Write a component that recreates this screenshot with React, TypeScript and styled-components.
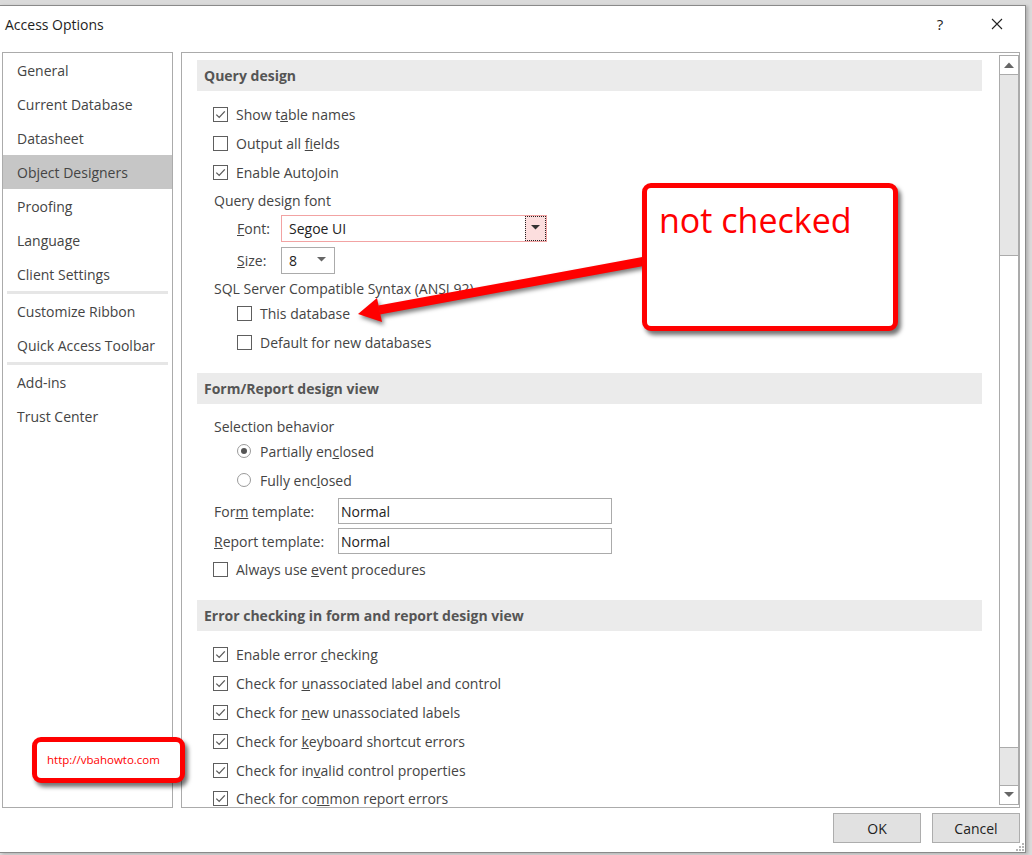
import React from "react";
import styled, { createGlobalStyle } from "styled-components";

// ---------- Global Styles ----------
const GlobalStyle = createGlobalStyle`
  * { box-sizing: border-box; }
  html, body { margin: 0; padding: 0; }
  body {
    background: #dadada;
    font-family: "Open Sans", "Segoe UI", "Liberation Sans", sans-serif;
    font-size: 14px;
    color: #444;
    overflow: hidden;
  }
`;

// ---------- styled-components ----------
const S = {
  Screen: styled.div`
    position: relative;
    width: 1032px;
    height: 855px;
    overflow: hidden;
  `,
  Dialog: styled.div`
    margin-top: 5px;
    width: 1026px;
    height: 848px;
    background: #fff;
    border-top: 1px solid #8a8a8a;
    border-right: 1px solid #8a8a8a;
    border-bottom: 1px solid #8a8a8a;
    box-shadow: 2px 1px 3px rgba(0, 0, 0, 0.2);
    display: flex;
    flex-direction: column;
  `,
  TitleBar: styled.div`
    height: 36px;
    display: flex;
    align-items: center;
    padding: 0 5px 0 5px;
  `,
  Title: styled.div`
    flex: 1;
    font-size: 14px;
    color: #1e1e1e;
  `,
  Help: styled.div`
    width: 30px;
    margin-right: 19px;
    text-align: center;
    font-size: 15px;
    color: #222;
  `,
  Close: styled.div`
    width: 46px;
    display: flex;
    justify-content: center;
    align-items: center;
  `,
  Body: styled.div`
    margin-top: 10px;
    height: 756px;
    display: flex;
    gap: 8px;
    padding-left: 2px;
  `,
  Nav: styled.nav`
    width: 171px;
    border: 1px solid #ababab;
    display: flex;
    flex-direction: column;
  `,
  NavItem: styled.div<{ $active?: boolean }>`
    height: 34px;
    flex: none;
    display: flex;
    align-items: center;
    padding-left: 14px;
    color: #444;
    background: ${(p) => (p.$active ? "#c6c6c6" : "transparent")};
  `,
  NavSep: styled.div`
    height: 3px;
    flex: none;
    margin: 0 4px;
    background: #e6e6e6;
  `,
  Panel: styled.div`
    width: 839px;
    border: 1px solid #ababab;
    display: flex;
    overflow: hidden;
  `,
  Scroll: styled.div`
    flex: 1;
    padding: 7px 17px 0 15px;
    overflow: hidden;
  `,
  SectionHead: styled.div<{ $mt?: number }>`
    height: 31px;
    margin-top: ${(p) => p.$mt ?? 0}px;
    background: #ebebeb;
    padding-left: 7px;
    display: flex;
    align-items: center;
    font-weight: 700;
    color: #555;
  `,
  Row: styled.div<{ $h: number; $indent: number; $mt?: number }>`
    height: ${(p) => p.$h}px;
    margin-top: ${(p) => p.$mt ?? 0}px;
    padding-left: ${(p) => p.$indent}px;
    display: flex;
    align-items: center;
    white-space: nowrap;
  `,
  Box: styled.span`
    width: 15px;
    height: 15px;
    flex: none;
    border: 1px solid #5e5e5e;
    background: #fff;
    margin-right: 8px;
    display: flex;
    align-items: center;
    justify-content: center;
  `,
  Radio: styled.span<{ $on?: boolean }>`
    width: 14px;
    height: 14px;
    flex: none;
    border-radius: 50%;
    border: 1px solid #9a9a9a;
    margin-right: 9px;
    display: flex;
    align-items: center;
    justify-content: center;
    &::after {
      content: "";
      width: 6px;
      height: 6px;
      border-radius: 50%;
      background: ${(p) => (p.$on ? "#555" : "transparent")};
    }
  `,
  Key: styled.u`
    text-decoration: underline;
    text-underline-offset: 1px;
  `,
  FieldLabel: styled.span<{ $w: number }>`
    width: ${(p) => p.$w}px;
    flex: none;
  `,
  Combo: styled.div<{ $w: number; $h: number; $focus?: boolean }>`
    width: ${(p) => p.$w}px;
    height: ${(p) => p.$h}px;
    border: 1px solid ${(p) => (p.$focus ? "#f2a3a3" : "#ababab")};
    background: #fff;
    display: flex;
    align-items: center;
    color: #222;
  `,
  ComboText: styled.span`
    flex: 1;
    padding-left: 7px;
  `,
  ComboBtn: styled.span<{ $focus?: boolean }>`
    width: ${(p) => (p.$focus ? 21 : 26)}px;
    align-self: stretch;
    display: flex;
    align-items: center;
    justify-content: center;
    background: ${(p) => (p.$focus ? "#fcdede" : "transparent")};
    border: ${(p) => (p.$focus ? "1px dotted #222" : "none")};
  `,
  TextInput: styled.div`
    width: 274px;
    height: 26px;
    border: 1px solid #ababab;
    padding-left: 2px;
    display: flex;
    align-items: center;
    color: #222;
  `,
  Scrollbar: styled.div`
    width: 20px;
    margin: 2px 0;
    border: 1px solid #ababab;
    background: #e6e6e6;
    display: flex;
    flex-direction: column;
  `,
  ScrollBtn: styled.div<{ $down?: boolean }>`
    height: 19px;
    flex: none;
    background: #fff;
    display: flex;
    align-items: center;
    justify-content: center;
    border-${(p) => (p.$down ? "top" : "bottom")}: 1px solid #ababab;
    margin-top: ${(p) => (p.$down ? "auto" : "0")};
  `,
  Thumb: styled.div`
    height: 493px;
    flex: none;
    margin-top: 180px;
    background: #fff;
    border-top: 1px solid #ababab;
    border-bottom: 1px solid #ababab;
  `,
  Footer: styled.div`
    position: relative;
    flex: 1;
    display: flex;
    justify-content: flex-end;
    align-items: flex-start;
    gap: 11px;
    padding: 5px 5px 0 0;
  `,
  Button: styled.button`
    width: 88px;
    height: 30px;
    border: 1px solid #adadad;
    background: #e1e1e1;
    font-family: inherit;
    font-size: 14px;
    color: #222;
    padding: 0;
  `,
  Grip: styled.svg`
    position: absolute;
    right: 0;
    bottom: 0;
  `,
  Callout: styled.div`
    position: absolute;
    left: 642px;
    top: 183px;
    width: 256px;
    height: 148px;
    border: 5px solid #ff0000;
    border-radius: 9px;
    background: #fff;
    box-shadow: 3px 4px 4px rgba(0, 0, 0, 0.55);
    padding: 12px 0 0 12px;
    color: #ff0000;
    font-size: 34px;
    line-height: 1.2;
  `,
  UrlTag: styled.div`
    position: absolute;
    left: 32px;
    top: 737px;
    width: 153px;
    height: 46px;
    border: 5px solid #ff0000;
    border-radius: 9px;
    background: #fff;
    box-shadow: 3px 4px 4px rgba(0, 0, 0, 0.55);
    padding: 0 0 2px 10px;
    display: flex;
    align-items: center;
    color: #ff0000;
    font-size: 11.5px;
  `,
  Arrow: styled.svg`
    position: absolute;
    left: 0;
    top: 0;
    pointer-events: none;
    filter: drop-shadow(2px 3px 2px rgba(0, 0, 0, 0.5));
  `,
};

// ---------- small drawings ----------
const Check = () => (
  <svg width="13" height="13" viewBox="0 0 13 13">
    <path d="M2.3 6.6 L5.2 9.4 L10.8 3.4" fill="none" stroke="#5a5a5a" strokeWidth="1.3" />
  </svg>
);

const Tri = ({ up, color = "#666", w = 9 }: { up?: boolean; color?: string; w?: number }) => (
  <svg width={w} height={w / 2 + 1} viewBox={`0 0 ${w} ${w / 2 + 1}`}>
    {up ? (
      <path d={`M0 ${w / 2 + 1} L${w / 2} 0.5 L${w} ${w / 2 + 1} Z`} fill={color} />
    ) : (
      <path d={`M0 0 L${w} 0 L${w / 2} ${w / 2} Z`} fill={color} />
    )}
  </svg>
);

function CheckRow({
  on,
  indent = 16,
  h = 29,
  mt,
  children,
}: {
  on?: boolean;
  indent?: number;
  h?: number;
  mt?: number;
  children: React.ReactNode;
}) {
  return (
    <S.Row $h={h} $indent={indent} $mt={mt}>
      <S.Box>{on && <Check />}</S.Box>
      <span>{children}</span>
    </S.Row>
  );
}

const navTop = ["General", "Current Database", "Datasheet", "Object Designers", "Proofing", "Language", "Client Settings"];

// ---------- component ----------
export default function App() {
  return (
    <>
      <GlobalStyle />
      <S.Screen>
        <S.Dialog>
          <S.TitleBar>
            <S.Title>Access Options</S.Title>
            <S.Help>?</S.Help>
            <S.Close>
              <svg width="12" height="12" viewBox="0 0 12 12">
                <path d="M1 1 L11 11 M11 1 L1 11" stroke="#222" strokeWidth="1.1" />
              </svg>
            </S.Close>
          </S.TitleBar>

          <S.Body>
            <S.Nav>
              {navTop.map((n) => (
                <S.NavItem key={n} $active={n === "Object Designers"}>
                  {n}
                </S.NavItem>
              ))}
              <S.NavSep />
              <S.NavItem>Customize Ribbon</S.NavItem>
              <S.NavItem>Quick Access Toolbar</S.NavItem>
              <S.NavSep />
              <S.NavItem>Add-ins</S.NavItem>
              <S.NavItem>Trust Center</S.NavItem>
            </S.Nav>

            <S.Panel>
              <S.Scroll>
                <S.SectionHead>Query design</S.SectionHead>
                <CheckRow on mt={9}>
                  Show t<S.Key>a</S.Key>ble names
                </CheckRow>
                <CheckRow>
                  Output all <S.Key>f</S.Key>ields
                </CheckRow>
                <CheckRow on>
                  Enable Auto<S.Key>J</S.Key>oin
                </CheckRow>
                <S.Row $h={27} $indent={17}>Query design font</S.Row>
                <S.Row $h={28} $indent={40}>
                  <S.FieldLabel $w={44}>
                    <S.Key>F</S.Key>ont:
                  </S.FieldLabel>
                  <S.Combo $w={266} $h={27} $focus>
                    <S.ComboText>Segoe UI</S.ComboText>
                    <S.ComboBtn $focus>
                      <Tri color="#333" w={9} />
                    </S.ComboBtn>
                  </S.Combo>
                </S.Row>
                <S.Row $h={36} $indent={40}>
                  <S.FieldLabel $w={44}>
                    <S.Key>S</S.Key>ize:
                  </S.FieldLabel>
                  <S.Combo $w={54} $h={27}>
                    <S.ComboText>8</S.ComboText>
                    <S.ComboBtn>
                      <Tri color="#666" w={9} />
                    </S.ComboBtn>
                  </S.Combo>
                </S.Row>
                <S.Row $h={20} $indent={17}>SQL Server Compatible Syntax (ANSI 92)</S.Row>
                <CheckRow indent={40} h={30}>
                  This database
                </CheckRow>
                <CheckRow indent={40} h={28}>
                  Default for new databases
                </CheckRow>

                <S.SectionHead $mt={17}>Form/Report design view</S.SectionHead>
                <S.Row $h={28} $indent={17} $mt={8}>
                  Selection behavior
                </S.Row>
                <S.Row $h={22} $indent={40}>
                  <S.Radio $on />
                  <span>
                    Partially en<S.Key>c</S.Key>losed
                  </span>
                </S.Row>
                <S.Row $h={36} $indent={40}>
                  <S.Radio />
                  <span>
                    Fully enc<S.Key>l</S.Key>osed
                  </span>
                </S.Row>
                <S.Row $h={26} $indent={17}>
                  <S.FieldLabel $w={124}>
                    For<S.Key>m</S.Key> template:
                  </S.FieldLabel>
                  <S.TextInput>Normal</S.TextInput>
                </S.Row>
                <S.Row $h={26} $indent={17} $mt={4}>
                  <S.FieldLabel $w={124}>
                    <S.Key>R</S.Key>eport template:
                  </S.FieldLabel>
                  <S.TextInput>Normal</S.TextInput>
                </S.Row>
                <CheckRow h={30}>
                  Always use <S.Key>e</S.Key>vent procedures
                </CheckRow>

                <S.SectionHead $mt={16}>Error checking in form and report design view</S.SectionHead>
                <CheckRow on mt={9}>
                  Enable error <S.Key>c</S.Key>hecking
                </CheckRow>
                <CheckRow on>
                  Check for <S.Key>u</S.Key>nassociated label and control
                </CheckRow>
                <CheckRow on>
                  Check for <S.Key>n</S.Key>ew unassociated labels
                </CheckRow>
                <CheckRow on>
                  Check for <S.Key>k</S.Key>eyboard shortcut errors
                </CheckRow>
                <CheckRow on>
                  Check for in<S.Key>v</S.Key>alid control properties
                </CheckRow>
                <CheckRow on h={27}>
                  Check for co<S.Key>m</S.Key>mon report errors
                </CheckRow>
              </S.Scroll>

              <S.Scrollbar>
                <S.ScrollBtn>
                  <Tri up color="#666" w={10} />
                </S.ScrollBtn>
                <S.Thumb />
                <S.ScrollBtn $down>
                  <Tri color="#666" w={10} />
                </S.ScrollBtn>
              </S.Scrollbar>
            </S.Panel>
          </S.Body>

          <S.Footer>
            <S.Button>OK</S.Button>
            <S.Button>Cancel</S.Button>
            <S.Grip width="10" height="10" viewBox="0 0 10 10">
              {[
                [7, 1],
                [4, 4],
                [7, 4],
                [1, 7],
                [4, 7],
                [7, 7],
              ].map(([x, y], i) => (
                <rect key={i} x={x} y={y} width="2" height="2" fill="#b5b5b5" />
              ))}
            </S.Grip>
          </S.Footer>
        </S.Dialog>

        <S.Arrow width="1032" height="855" viewBox="0 0 1032 855">
          <line x1="379" y1="310" x2="662" y2="258" stroke="#ff0000" strokeWidth="9" />
          <polygon points="358,314 382,322 377,298" fill="#ff0000" />
        </S.Arrow>

        <S.Callout>not checked</S.Callout>
        <S.UrlTag>http://vbahowto.com</S.UrlTag>
      </S.Screen>
    </>
  );
}
